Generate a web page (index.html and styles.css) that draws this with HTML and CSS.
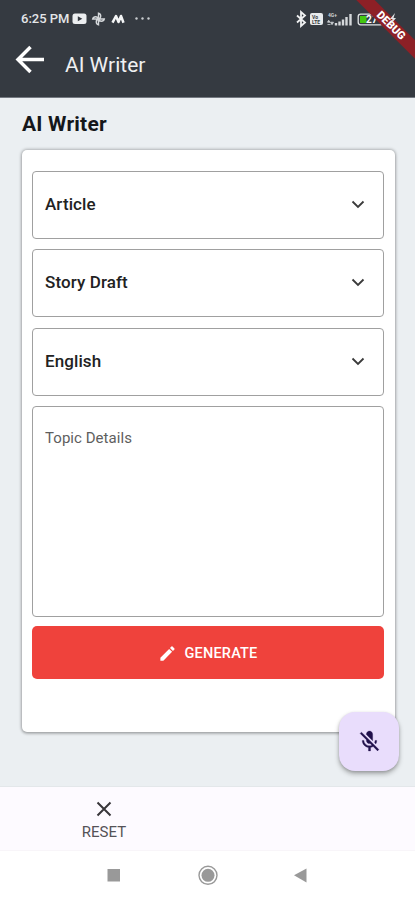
FILE: index.html
```html
<!DOCTYPE html>
<html lang="en">
<head>
<meta charset="utf-8">
<title>AI Writer</title>
<link rel="stylesheet" href="styles.css">
</head>
<body>
<div class="app">
  <header class="header">
    <div class="status">
      <span class="clock">6:25 PM</span>
      <svg class="status-left" width="80" height="14" viewBox="0 0 80 14">
        <rect x="0.5" y="1.500" width="14" height="10.500" rx="2.500" fill="#eceef0"/>
        <path d="M5.800 4.200 10.300 6.700 5.800 9.200z" fill="#353a41"/>
        <g fill="none" stroke="#d5d8db" stroke-width="1.400">
          <path d="M26.500 7V1.200a3 3 0 0 1 0 5.800zM26.500 7h5.800a3 3 0 0 1-5.800 0zM26.500 7v5.800a3 3 0 0 1 0-5.800zM26.500 7h-5.800a3 3 0 0 1 5.800 0z"/>
        </g>
        <path d="M40.500 10.700 44 4 46.500 10 49 4 51.500 10.700" fill="none" stroke="#f4f5f6" stroke-width="2.500" stroke-linejoin="round"/>
        <g fill="#c9ccd0"><circle cx="64.500" cy="6.500" r="1.200"/><circle cx="70.500" cy="6.500" r="1.200"/><circle cx="76.500" cy="6.500" r="1.200"/></g>
      </svg>
      <svg class="status-right" width="102" height="18" viewBox="0 0 102 18">
        <path d="M2 5.500 10 12.500 6 16V2l4 3.500-8 7" fill="none" stroke="#f0f1f2" stroke-width="1.800"/>
        <rect x="15" y="3" width="13" height="12" rx="2" fill="#e8eaec"/>
        <text x="17" y="8.500" class="tiny dark">Vo</text>
        <text x="17" y="13.700" class="tiny dark">LTE</text>
        <text x="33" y="7" class="tiny">4G+</text>
        <path d="M32.500 12.200h2.500l-1.300-2zM35.500 12.200h3l-1.500 2.500zM32.500 14.500h3" fill="#cdd0d4" stroke="#cdd0d4" stroke-width=".8"/>
        <path d="M41 15.500v-2.500M44.500 15.500v-4M48 15.500v-6M51.500 15.500v-8.500M55.500 15.500v-11.500" stroke="#d5d8db" stroke-width="2.400"/>
        <rect x="63.200" y="4.200" width="24.600" height="10.600" rx="2.500" fill="#353a41" stroke="#e2e5e7" stroke-width="1.300"/>
        <rect x="65" y="6" width="6.500" height="7" fill="#43c711"/>
        <text x="71" y="13" class="battery">27</text>
      </svg>
    </div>
    <div class="toolbar">
      <svg width="30" height="30" viewBox="0 0 30 30"><path d="M29 14.500H3M15.500 2 3 14.500 15.500 27" fill="none" stroke="#fff" stroke-width="3.500"/></svg>
      <span class="toolbar-title">AI Writer</span>
    </div>
    <div class="debug">DEBUG</div>
    <svg class="bolt" width="8" height="12" viewBox="0 0 8 12"><path d="M6 0 1 6h2.500L2 11l5-6H4.500z" fill="#e2e3e5"/></svg>
  </header>
  <main class="content">
    <h1 class="heading">AI Writer</h1>
    <section class="card">
      <div class="field"><span>Article</span><svg width="14" height="10" viewBox="0 0 14 10"><path d="M1.500 1.500 7 7 12.500 1.500" class="chevron"/></svg></div>
      <div class="field"><span>Story Draft</span><svg width="14" height="10" viewBox="0 0 14 10"><path d="M1.500 1.500 7 7 12.500 1.500" class="chevron"/></svg></div>
      <div class="field"><span>English</span><svg width="14" height="10" viewBox="0 0 14 10"><path d="M1.500 1.500 7 7 12.500 1.500" class="chevron"/></svg></div>
      <div class="topic">Topic Details</div>
      <div class="generate">
        <svg width="19" height="19" viewBox="0 0 24 24"><path fill="#fff" d="M3 17.250V21h3.750L17.810 9.940l-3.750-3.750L3 17.250zM20.710 7.040a1 1 0 0 0 0-1.410l-2.340-2.340a1 1 0 0 0-1.410 0l-1.830 1.830 3.750 3.750 1.830-1.830z"/></svg>
        <span>GENERATE</span>
      </div>
    </section>
    <div class="fab">
      <svg width="25" height="25" viewBox="0 0 24 24"><path fill="#20104b" stroke="#20104b" stroke-width=".3" d="M19 11h-1.700c0 .740-.160 1.430-.430 2.050l1.230 1.230c.560-.980.900-2.090.900-3.280zm-4.020.170c0-.060.020-.110.020-.170V5c0-1.660-1.340-3-3-3S9 3.340 9 5v.180l5.980 5.990zM4.270 3 3 4.270l6.010 6.010V11c0 1.660 1.330 3 2.990 3 .220 0 .440-.030.650-.080l1.660 1.660c-.710.330-1.500.520-2.310.520-2.760 0-5.300-2.100-5.300-5.100H5c0 3.410 2.720 6.230 6 6.720V21h2v-3.280c.910-.130 1.770-.450 2.540-.900L19.730 21 21 19.730 4.270 3z"/></svg>
    </div>
  </main>
  <nav class="bottom">
    <div class="reset">
      <svg width="16" height="16" viewBox="0 0 16 16"><path d="M1.500 1.500 14.500 14.500M14.500 1.500 1.500 14.500" stroke="#38363a" stroke-width="2"/></svg>
      <span>RESET</span>
    </div>
  </nav>
  <footer class="system">
    <svg width="200" height="22" viewBox="0 0 200 22">
      <rect x="0.500" y="5" width="12.500" height="12.500" fill="#999"/>
      <circle cx="101" cy="11.300" r="9" fill="none" stroke="#999" stroke-width="1.400"/>
      <circle cx="101" cy="11.300" r="6.500" fill="#999"/>
      <path d="M187 11.300 199.500 4.500v14z" fill="#999"/>
    </svg>
  </footer>
</div>
</body>
</html>
```
FILE: styles.css
```css
* { box-sizing: border-box; }
body { margin: 0; font-family: Roboto, "Liberation Sans", sans-serif; background: #fff; }
svg { display: block; flex: none; }
.app { position: relative; width: 415px; height: 900px; overflow: hidden; display: flex; flex-direction: column; }
.header { position: relative; overflow: hidden; height: 98px; flex: none; background: #353a41; border-bottom: 1px solid #747981; }
.status { display: flex; align-items: center; height: 37px; padding-left: 21px; color: #e4e6e8; }
.clock { width: 51px; font-size: 13px; font-weight: 500; white-space: nowrap; letter-spacing: 0; }
.status-right { margin-left: 143px; }
.tiny { font-size: 5px; font-weight: 700; fill: #cdd0d4; }
.tiny.dark { fill: #353a41; }
.battery { font-size: 10px; font-weight: 700; fill: #fff; }
.toolbar { display: flex; align-items: center; height: 46px; padding-left: 15px; gap: 20px; }
.toolbar-title { color: #eff0f1; font-size: 21px; line-height: 26px; letter-spacing: 0; padding-top: 9px; }
.debug { position: absolute; left: 331px; top: 18.500px; width: 120px; height: 13px; transform: rotate(45deg); background: #8d2026; color: #fff; font-size: 11px; font-weight: 900; line-height: 13px; text-align: center; }
.bolt { position: absolute; left: 389px; top: 13px; }
.content { position: relative; height: 689px; flex: none; padding: 13px 20px 0 21.500px; background: #ebeff2; border-bottom: 1px solid #e3e7ea; }
.heading { margin: 0; height: 39px; padding-left: 0.500px; font-size: 21px; line-height: 26px; font-weight: 700; letter-spacing: 0.2px; color: #15171a; }
.card { display: flex; flex-direction: column; height: 582px; padding: 21px 11px 0 10.500px; background: #fff; border-radius: 5px; box-shadow: 0 0 3px 1px rgba(0,0,0,.25), 0 2px 3px rgba(0,0,0,.15); }
.field { display: flex; align-items: center; justify-content: space-between; height: 68px; margin-bottom: 10.400px; padding: 0 18px 2px 12px; border: 1px solid #a0a0a0; border-radius: 4px; font-size: 17px; font-weight: 500; letter-spacing: 0.1px; color: #222; }
.field svg { margin-top: 2px; }
.chevron { fill: none; stroke: #3a3a3a; stroke-width: 1.800; }
.topic { height: 211px; padding: 22px 12px; border: 1px solid #a0a0a0; border-radius: 4px; font-size: 15px; line-height: 19px; letter-spacing: 0.050px; color: #5e5e5e; }
.generate { display: flex; align-items: center; justify-content: center; gap: 7px; height: 53px; margin-top: 9px; padding-top: 1px; background: #ef423c; border-radius: 5px; color: #fff; font-size: 14.500px; font-weight: 500; letter-spacing: 0.2px; }
.fab { position: absolute; left: 339px; top: 614px; width: 60px; height: 59px; display: flex; align-items: center; justify-content: center; background: #e9ddfc; border-radius: 16px; box-shadow: 0 3px 5px rgba(0,0,0,.28), 0 1px 3px rgba(0,0,0,.15); }
.bottom { height: 64px; flex: none; background: #fdfaff; border-bottom: 1px solid #f8f5f9; }
.reset { display: flex; flex-direction: column; align-items: center; width: 208px; padding-top: 14px; gap: 6px; font-size: 15px; line-height: 19px; color: #555257; }
.system { padding: 13px 0 0 107px; }
```
